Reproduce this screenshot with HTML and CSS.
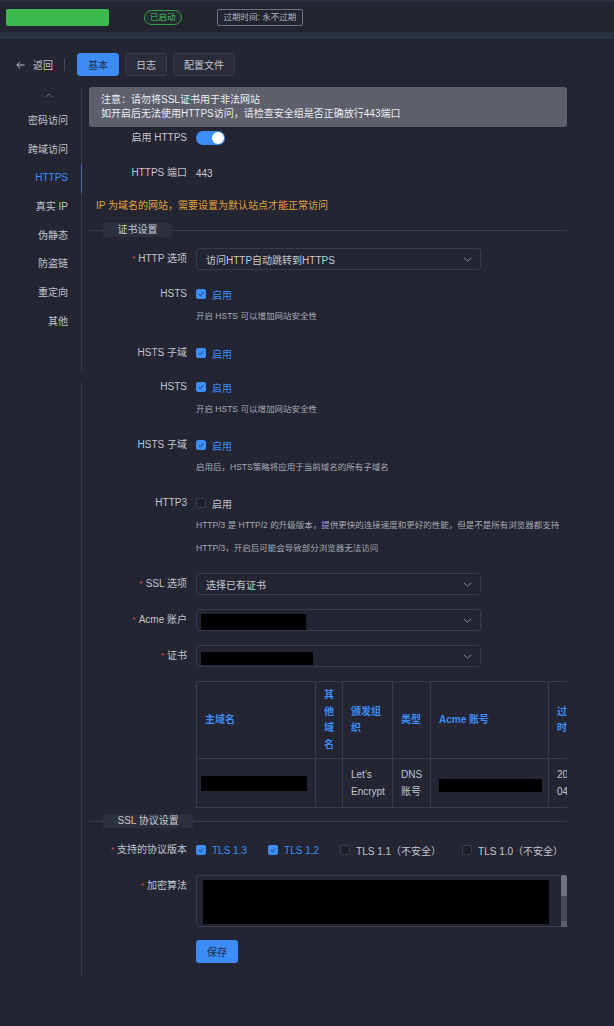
FILE: index.html
```html
<!DOCTYPE html>
<html lang="zh-CN">
<head>
<meta charset="utf-8">
<title>网站设置 - HTTPS</title>
<link rel="stylesheet" href="styles.css">
</head>
<body>
<header class="topbar">
  <div class="site-name"></div>
  <span class="status-tag">已启动</span>
  <span class="expire">过期时间: 永不过期</span>
</header>
<div class="strip"></div>
<main class="page">
  <div class="toolbar">
    <a class="back">
      <svg width="9" height="8" viewBox="0 0 9 8"><path d="M4 0.8 L0.9 4 L4 7.2 M0.9 4 H8.6" fill="none" stroke="#c3c6ce" stroke-width="1"/></svg>
      <span>返回</span>
    </a>
    <span class="tool-sep"></span>
    <button class="tab active">基本</button>
    <button class="tab">日志</button>
    <button class="tab">配置文件</button>
  </div>

  <div class="layout">
    <aside class="side">
      <nav class="side-nav">
        <div class="side-up"><svg width="8" height="5" viewBox="0 0 8 5"><path d="M0.8 4.2 L4 1 L7.2 4.2" fill="none" stroke="#6d707c" stroke-width="1"/></svg></div>
        <a class="side-item">密码访问</a>
        <a class="side-item">跨域访问</a>
        <a class="side-item active">HTTPS</a>
        <a class="side-item">真实 IP</a>
        <a class="side-item">伪静态</a>
        <a class="side-item">防盗链</a>
        <a class="side-item">重定向</a>
        <a class="side-item">其他</a>
      </nav>
      <div class="side-rail"></div>
    </aside>

    <section class="content">
      <div class="alert">
        <p>注意：请勿将SSL证书用于非法网站</p>
        <p>如开启后无法使用HTTPS访问，请检查安全组是否正确放行443端口</p>
      </div>

      <div class="field gap-0">
        <label class="field-label">启用 HTTPS</label>
        <div class="field-ctrl row"><span class="switch"><span class="knob"></span></span></div>
      </div>

      <div class="field gap-13">
        <label class="field-label">HTTPS 端口</label>
        <div class="field-ctrl row">443</div>
      </div>

      <p class="note">IP 为域名的网站，需要设置为默认站点才能正常访问</p>

      <div class="divider"><span class="divider-label">证书设置</span></div>

      <div class="field gap-11">
        <label class="field-label"><span class="req">*</span>HTTP 选项</label>
        <div class="field-ctrl">
          <div class="select"><span>访问HTTP自动跳转到HTTPS</span><svg class="caret" width="9" height="5" viewBox="0 0 9 5"><path d="M0.8 0.8 L4.5 4.2 L8.2 0.8" fill="none" stroke="#8b8e9a" stroke-width="1"/></svg></div>
        </div>
      </div>

      <div class="field gap-13">
        <label class="field-label">HSTS</label>
        <div class="field-ctrl">
          <div class="row"><span class="check on"><span class="box"><svg width="8" height="8" viewBox="0 0 8 8"><path d="M1.6 4.2 L3.3 5.8 L6.5 2.2" fill="none" stroke="#1f3766" stroke-width="0.9"/></svg></span>启用</span></div>
          <p class="hint">开启 HSTS 可以增加网站安全性</p>
        </div>
      </div>

      <div class="field gap-14">
        <label class="field-label">HSTS 子域</label>
        <div class="field-ctrl">
          <div class="row"><span class="check on"><span class="box"><svg width="8" height="8" viewBox="0 0 8 8"><path d="M1.6 4.2 L3.3 5.8 L6.5 2.2" fill="none" stroke="#1f3766" stroke-width="0.9"/></svg></span>启用</span></div>
        </div>
      </div>

      <div class="field gap-12">
        <label class="field-label">HSTS</label>
        <div class="field-ctrl">
          <div class="row"><span class="check on"><span class="box"><svg width="8" height="8" viewBox="0 0 8 8"><path d="M1.6 4.2 L3.3 5.8 L6.5 2.2" fill="none" stroke="#1f3766" stroke-width="0.9"/></svg></span>启用</span></div>
          <p class="hint">开启 HSTS 可以增加网站安全性</p>
        </div>
      </div>

      <div class="field gap-13">
        <label class="field-label">HSTS 子域</label>
        <div class="field-ctrl">
          <div class="row"><span class="check on"><span class="box"><svg width="8" height="8" viewBox="0 0 8 8"><path d="M1.6 4.2 L3.3 5.8 L6.5 2.2" fill="none" stroke="#1f3766" stroke-width="0.9"/></svg></span>启用</span></div>
          <p class="hint">启用后，HSTS策略将应用于当前域名的所有子域名</p>
        </div>
      </div>

      <div class="field gap-13">
        <label class="field-label">HTTP3</label>
        <div class="field-ctrl">
          <div class="row"><span class="check"><span class="box"></span>启用</span></div>
          <p class="hint">HTTP/3 是 HTTP/2 的升级版本，提供更快的连接速度和更好的性能，但是不是所有浏览器都支持 HTTP/3，开启后可能会导致部分浏览器无法访问</p>
        </div>
      </div>

      <div class="field gap-13">
        <label class="field-label"><span class="req">*</span>SSL 选项</label>
        <div class="field-ctrl">
          <div class="select"><span>选择已有证书</span><svg class="caret" width="9" height="5" viewBox="0 0 9 5"><path d="M0.8 0.8 L4.5 4.2 L8.2 0.8" fill="none" stroke="#8b8e9a" stroke-width="1"/></svg></div>
        </div>
      </div>

      <div class="field gap-14">
        <label class="field-label"><span class="req">*</span>Acme 账户</label>
        <div class="field-ctrl">
          <div class="select masked"><span class="redact acme-sel"></span><svg class="caret" width="9" height="5" viewBox="0 0 9 5"><path d="M0.8 0.8 L4.5 4.2 L8.2 0.8" fill="none" stroke="#8b8e9a" stroke-width="1"/></svg></div>
        </div>
      </div>

      <div class="field gap-14">
        <label class="field-label"><span class="req">*</span>证书</label>
        <div class="field-ctrl">
          <div class="select masked"><span class="redact cert-sel"></span><svg class="caret" width="9" height="5" viewBox="0 0 9 5"><path d="M0.8 0.8 L4.5 4.2 L8.2 0.8" fill="none" stroke="#8b8e9a" stroke-width="1"/></svg></div>
        </div>
      </div>

      <div class="field gap-14">
        <span class="field-label"></span>
        <div class="field-ctrl">
          <table class="cert-table">
            <colgroup>
              <col style="width:119px"><col style="width:27px"><col style="width:50px"><col style="width:38px"><col style="width:118px"><col style="width:45px">
            </colgroup>
            <thead>
              <tr><th>主域名</th><th>其他域名</th><th>颁发组织</th><th>类型</th><th>Acme 账号</th><th>过期时间</th></tr>
            </thead>
            <tbody>
              <tr>
                <td><span class="redact domain"></span></td>
                <td></td>
                <td>Let's Encrypt</td>
                <td>DNS 账号</td>
                <td><span class="redact account"></span></td>
                <td><span class="nowrap">2025-07-01</span> <span class="nowrap">04:00:00</span></td>
              </tr>
            </tbody>
          </table>
        </div>
      </div>

      <div class="divider gap-11"><span class="divider-label">SSL 协议设置</span></div>

      <div class="field gap-11">
        <label class="field-label"><span class="req">*</span>支持的协议版本</label>
        <div class="field-ctrl row">
          <span class="check on"><span class="box"><svg width="8" height="8" viewBox="0 0 8 8"><path d="M1.6 4.2 L3.3 5.8 L6.5 2.2" fill="none" stroke="#1f3766" stroke-width="0.9"/></svg></span>TLS 1.3</span>
          <span class="check on"><span class="box"><svg width="8" height="8" viewBox="0 0 8 8"><path d="M1.6 4.2 L3.3 5.8 L6.5 2.2" fill="none" stroke="#1f3766" stroke-width="0.9"/></svg></span>TLS 1.2</span>
          <span class="check"><span class="box"></span>TLS 1.1（不安全）</span>
          <span class="check"><span class="box"></span>TLS 1.0（不安全）</span>
        </div>
      </div>

      <div class="field gap-14">
        <label class="field-label"><span class="req">*</span>加密算法</label>
        <div class="field-ctrl">
          <div class="textarea">
            <span class="redact cipher"></span>
            <span class="scrollbar"><span class="thumb"></span><span class="track"></span><span class="corner"></span></span>
          </div>
        </div>
      </div>

      <div class="field gap-13">
        <span class="field-label"></span>
        <div class="field-ctrl"><button class="btn-primary">保存</button></div>
      </div>
    </section>
  </div>
</main>
</body>
</html>
```

FILE: styles.css
```css
* {
  box-sizing: border-box;
  margin: 0;
  padding: 0;
}

html, body {
  background: #232532;
}

body {
  font-family: "Liberation Sans", "Noto Sans CJK SC", sans-serif;
  font-size: 10px;
  color: #c3c6ce;
  min-height: 1026px;
}

/* ---------- top bar ---------- */
.topbar {
  height: 32px;
  border-top: 2px solid #2b2f3d;
  background: #22242f;
  display: flex;
  align-items: center;
  padding-left: 6px;
}

.site-name {
  width: 103px;
  height: 17px;
  background: #3cb94f;
  border-radius: 2px;
}

.status-tag {
  margin-left: 35px;
  height: 15px;
  padding: 0 5px;
  border: 1px solid #3a9d48;
  border-radius: 8px;
  background: rgba(60, 185, 79, 0.06);
  color: #4cc05c;
  font-size: 8.5px;
  line-height: 13px;
}

.expire {
  margin-left: 35px;
  height: 17px;
  padding: 0 6px;
  border: 1px solid #6f7280;
  border-radius: 2px;
  color: #b5b8c1;
  font-size: 8.5px;
  line-height: 15px;
}

.strip {
  height: 7px;
  background: #2c3141;
}

/* ---------- toolbar ---------- */
.toolbar {
  display: flex;
  align-items: center;
  height: 23px;
  margin-top: 14px;
  padding-left: 16px;
}

.back {
  display: flex;
  align-items: center;
  gap: 8px;
  color: #c3c6ce;
}

.tool-sep {
  width: 1px;
  height: 13px;
  background: #454856;
  margin: 0 12px 0 11px;
}

.tab {
  height: 23px;
  padding: 0 10px;
  margin-right: 6px;
  border: 1px solid #3a3d4b;
  border-radius: 3px;
  background: #2a2d39;
  color: #c3c6ce;
  font: inherit;
}

.tab.active {
  background: #3d8cf6;
  border-color: #3d8cf6;
  color: #1e2b45;
}

/* ---------- layout ---------- */
.layout {
  display: flex;
  margin-top: 11px;
}

.side {
  width: 82px;
  flex-shrink: 0;
  display: flex;
  flex-direction: column;
}

.side-nav {
  height: 285px;
  border-right: 1px solid #363947;
}

.side-up {
  height: 20px;
  display: flex;
  align-items: center;
  justify-content: center;
  padding-left: 16px;
  padding-bottom: 4px;
}

.side-item {
  display: block;
  height: 28.7px;
  line-height: 28.7px;
  padding-right: 13px;
  text-align: right;
  color: #c3c6ce;
}

.side-item.active {
  color: #3d8ef8;
  margin-right: -1px;
  border-right: 1px solid #4c6fae;
}

.side-rail {
  flex: 1;
  margin-top: 10px;
  border-right: 1px solid #363947;
}

.content {
  margin-left: 7px;
  width: 478px;
  overflow: hidden;
  padding-bottom: 12px;
}

/* ---------- alert ---------- */
.alert {
  background: #5d5f6b;
  border-radius: 3px;
  padding: 6px 12px;
  line-height: 14px;
  color: #eceef2;
}

/* ---------- form ---------- */
.field {
  display: flex;
  margin-top: 14px;
}

.gap-0 { margin-top: 0; }
.gap-11 { margin-top: 11px; }
.gap-12 { margin-top: 12px; }
.gap-13 { margin-top: 13px; }
.gap-14 { margin-top: 14px; }

.field-label {
  width: 98px;
  margin-right: 9px;
  flex-shrink: 0;
  text-align: right;
  line-height: 22px;
  color: #c3c6ce;
  white-space: nowrap;
}

.req {
  color: #e05a5a;
  font-size: 8px;
  margin-right: 3px;
  vertical-align: 1px;
}

.field-ctrl {
  flex: 1;
  min-width: 0;
  color: #c8cad2;
}

.row {
  display: flex;
  align-items: center;
  height: 22px;
}

.note {
  margin-top: 11px;
  padding-left: 7px;
  line-height: 22px;
  color: #e6a23c;
}

.divider {
  display: flex;
  align-items: center;
  height: 14px;
  margin-top: 6px;
}

.divider::before {
  content: "";
  width: 14px;
  height: 1px;
  background: #3a3d4a;
}

.divider::after {
  content: "";
  flex: 1;
  height: 1px;
  background: #3a3d4a;
}

.divider-label {
  height: 14px;
  line-height: 14px;
  padding: 0 14.5px;
  background: #2c2f3c;
  color: #c8cad2;
}

/* switch */
.switch {
  width: 29px;
  height: 14px;
  border-radius: 7px;
  background: #3d8ef8;
  display: flex;
  align-items: center;
  justify-content: flex-end;
  padding: 0 1px;
}

.knob {
  width: 12px;
  height: 12px;
  border-radius: 50%;
  background: #ffffff;
}

/* select */
.select {
  width: 285px;
  height: 22px;
  border: 1px solid #383b49;
  border-radius: 3px;
  display: flex;
  align-items: center;
  justify-content: space-between;
  padding: 0 8px 0 9px;
  color: #c8cad2;
}

.select.masked {
  padding-left: 4px;
}

.caret {
  flex-shrink: 0;
}

.redact {
  display: inline-block;
  background: #000;
}

.acme-sel {
  width: 105px;
  height: 16px;
  margin-top: 4px;
}

.cert-sel {
  width: 112px;
  height: 13px;
  margin-top: 5px;
}

/* checkbox */
.check {
  display: flex;
  align-items: center;
  gap: 6px;
  margin-right: 21px;
  color: #c3c6ce;
  white-space: nowrap;
}

.check .box {
  width: 10px;
  height: 10px;
  border: 1px solid #3a3d4b;
  border-radius: 2px;
  background: #1d1f28;
  display: flex;
  align-items: center;
  justify-content: center;
}

.check.on {
  color: #3d8ef8;
}

.check.on .box {
  background: #3d8ef8;
  border-color: #3d8ef8;
}

.hint {
  font-size: 8.5px;
  line-height: 23px;
  color: #a7aab3;
}

/* table */
.cert-table {
  border-collapse: collapse;
  table-layout: fixed;
  width: 397px;
  font-size: 10px;
}

.cert-table th,
.cert-table td {
  border: 1px solid #393c4a;
  padding: 5px 8px;
  text-align: left;
  vertical-align: middle;
}

.cert-table th {
  color: #3d8ef8;
  font-weight: bold;
  line-height: 16.5px;
}

.cert-table td {
  color: #c3c6ce;
  line-height: 17px;
  padding-top: 7px;
  padding-bottom: 7px;
}

.nowrap {
  white-space: nowrap;
}

.domain {
  width: 106px;
  height: 15px;
  margin-left: -4px;
  vertical-align: middle;
}

.account {
  width: 103px;
  height: 13px;
  margin-top: 4px;
  vertical-align: middle;
}

/* textarea */
.textarea {
  height: 52px;
  border: 1px solid #3b3e4c;
  border-radius: 3px;
  display: flex;
  justify-content: space-between;
  padding: 4px 0 2px 5.5px;
}

.cipher {
  width: 346px;
  height: 44px;
}

.scrollbar {
  width: 6px;
  margin: -5px -1px -3px 0;
  display: flex;
  flex-direction: column;
}

.scrollbar .thumb {
  height: 21px;
  background: #70737f;
  border-radius: 2px 2px 0 0;
}

.scrollbar .track {
  flex: 1;
  background: #474a56;
}

.scrollbar .corner {
  height: 6px;
  background: #5a5d69;
}

/* button */
.btn-primary {
  width: 42px;
  height: 23px;
  border: none;
  border-radius: 3px;
  background: #3d8cf6;
  color: #1e2b45;
  font: inherit;
}
```
